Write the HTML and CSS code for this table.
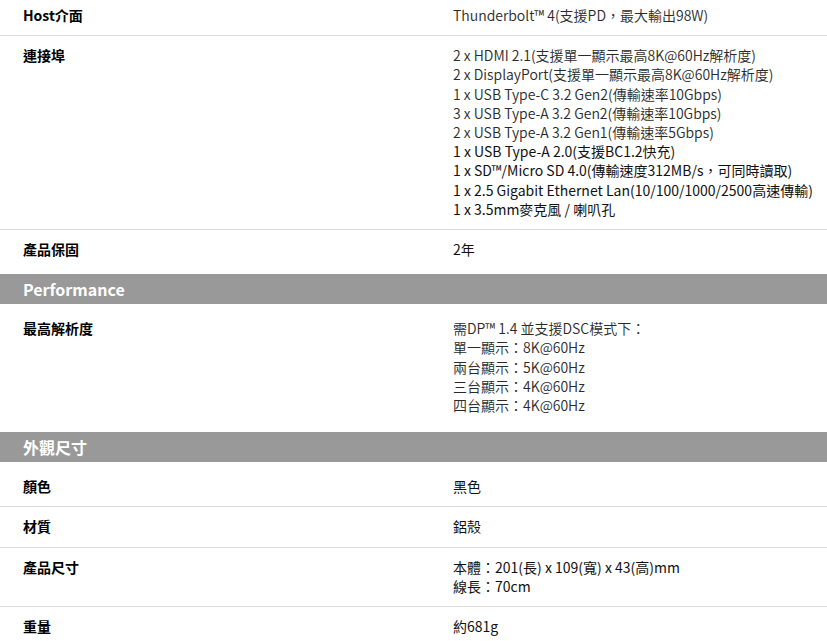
FILE: index.html
```html
<!DOCTYPE html>
<html lang="zh-Hant">
<head>
<meta charset="utf-8">
<link rel="stylesheet" href="styles.css">
</head>
<body>
<div class="specs">
  <div class="row first">
    <div class="label">Host介面</div>
    <div class="value light">Thunderbolt™ 4(支援PD，最大輸出98W)</div>
  </div>
  <div class="row">
    <div class="label">連接埠</div>
    <div class="value">
      <div class="light">2 x HDMI 2.1(支援單一顯示最高8K@60Hz解析度)</div>
      <div class="light">2 x DisplayPort(支援單一顯示最高8K@60Hz解析度)</div>
      <div class="light">1 x USB Type-C 3.2 Gen2(傳輸速率10Gbps)</div>
      <div class="light">3 x USB Type-A 3.2 Gen2(傳輸速率10Gbps)</div>
      <div class="light">2 x USB Type-A 3.2 Gen1(傳輸速率5Gbps)</div>
      <div>1 x USB Type-A 2.0(支援BC1.2快充)</div>
      <div>1 x SD™/Micro SD 4.0(傳輸速度312MB/s，可同時讀取)</div>
      <div>1 x 2.5 Gigabit Ethernet Lan(10/100/1000/2500高速傳輸)</div>
      <div>1 x 3.5mm麥克風 / 喇叭孔</div>
    </div>
  </div>
  <div class="row last">
    <div class="label">產品保固</div>
    <div class="value">2年</div>
  </div>

  <div class="section">Performance</div>
  <div class="row first-in-section last tall">
    <div class="label">最高解析度</div>
    <div class="value light">
      <div>需DP™ 1.4 並支援DSC模式下：</div>
      <div>單一顯示：8K@60Hz</div>
      <div>兩台顯示：5K@60Hz</div>
      <div>三台顯示：4K@60Hz</div>
      <div>四台顯示：4K@60Hz</div>
    </div>
  </div>

  <div class="section">外觀尺寸</div>
  <div class="row first-in-section">
    <div class="label">顏色</div>
    <div class="value">黑色</div>
  </div>
  <div class="row">
    <div class="label">材質</div>
    <div class="value">鋁殼</div>
  </div>
  <div class="row">
    <div class="label">產品尺寸</div>
    <div class="value">
      <div>本體：201(長) x 109(寬) x 43(高)mm</div>
      <div>線長：70cm</div>
    </div>
  </div>
  <div class="row last">
    <div class="label">重量</div>
    <div class="value">約681g</div>
  </div>
</div>
</body>
</html>
```

FILE: styles.css
```css
html, body {
  margin: 0;
  padding: 0;
  background: #fff;
}

body {
  font-family: "Noto Sans CJK TC", "Noto Sans", sans-serif;
  font-size: 14px;
  line-height: 19.2px;
  color: #111;
}

.specs {
  margin-top: -4px;
}

.row {
  display: grid;
  grid-template-columns: 453px 1fr;
  padding: 10px 0;
  border-bottom: 1px solid #dcdcdc;
}

.row.first-in-section {
  padding-top: 15px;
}

.row.last {
  border-bottom: none;
  padding-bottom: 15px;
}

.row.tall {
  padding-bottom: 17px;
}

.label {
  padding-left: 23px;
  font-weight: 700;
  color: #000;
}

.value {
  color: #111;
  font-weight: 400;
}

.light {
  font-weight: 350;
  color: #2a2a2a;
}

.section {
  background: #999;
  color: #fff;
  font-weight: 700;
  font-size: 16px;
  height: 30px;
  line-height: 30px;
  padding-left: 23px;
}
```
